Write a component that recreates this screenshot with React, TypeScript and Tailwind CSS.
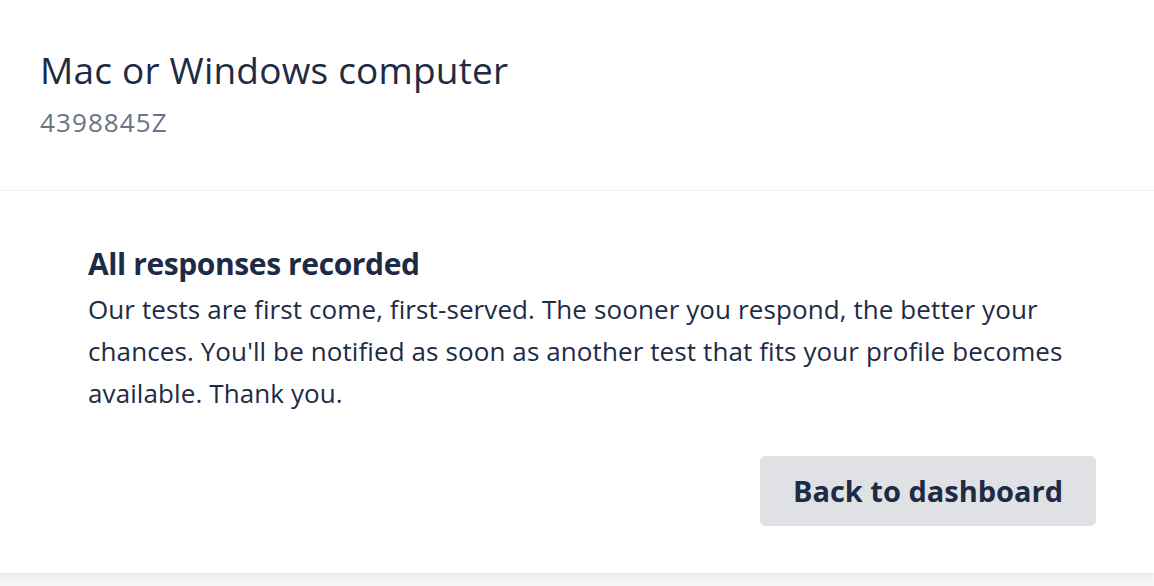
export default function App() {
  return (
    <div
      className="min-h-[586px] bg-[#f4f5f7]"
      style={{ fontFamily: "'Open Sans', 'Noto Sans', sans-serif" }}
    >
      <div className="bg-white shadow-[0_2px_6px_rgba(0,0,0,0.06)]">
        {/* Header */}
        <div className="border-b border-[#f0f1f3] px-10 pt-[46px] pb-[52px]">
          <h1 className="text-[37px] leading-[48px] font-normal tracking-[0.2px] text-[#1d2b45]">
            Mac or Windows computer
          </h1>
          <p className="mt-[12px] text-[26px] leading-[32px] tracking-[1.1px] text-[#6b7385]">
            4398845Z
          </p>
        </div>

        {/* Body */}
        <div className="pl-[88px] pr-[58px] pt-[55px] pb-[47px]">
          <h2 className="text-[30px] leading-[36px] font-bold tracking-[-0.4px] text-[#1d2b45]">
            All responses recorded
          </h2>
          <p className="mt-[6px] text-[26px] leading-[42px] tracking-[0.1px] text-[#1d2b45]">
            Our tests are first come, first-served. The sooner you respond, the better your
            chances. You'll be notified as soon as another test that fits your profile becomes
            available. Thank you.
          </p>
          <div className="mt-[42px] flex justify-end">
            <button className="h-[70px] w-[336px] rounded-md bg-[#dfe1e5] text-[29px] font-bold text-[#1d2b45]">
              Back to dashboard
            </button>
          </div>
        </div>
      </div>
    </div>
  );
}
